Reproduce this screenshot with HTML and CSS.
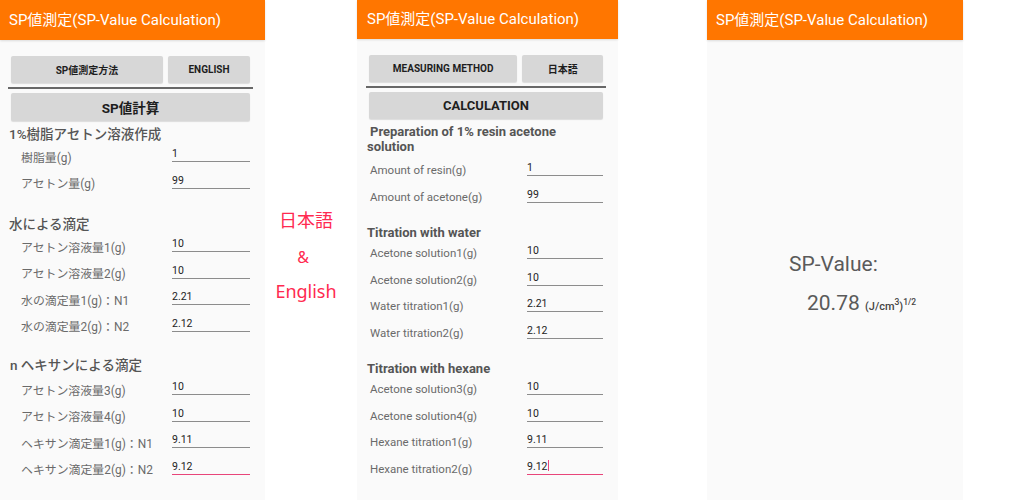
FILE: index.html
```html
<!DOCTYPE html>
<html lang="ja">
<head>
<meta charset="utf-8">
<title>SP値測定</title>
<link rel="stylesheet" href="styles.css">
</head>
<body>
<div class="stage">
  <section class="phone phone-ja">
    <header class="appbar">SP値測定(SP-Value Calculation)</header>
    <div class="content">
      <div class="btn-row">
        <div class="btn btn-main">SP値測定方法</div>
        <div class="btn btn-side">ENGLISH</div>
      </div>
      <div class="divider"></div>
      <div class="btn btn-big">SP値計算</div>

      <h2 class="sec sec-first">1%樹脂アセトン溶液作成</h2>
      <div class="field"><span class="lbl">樹脂量(g)</span><span class="inp">1</span></div>
      <div class="field"><span class="lbl">アセトン量(g)</span><span class="inp">99</span></div>

      <h2 class="sec">水による滴定</h2>
      <div class="field"><span class="lbl">アセトン溶液量1(g)</span><span class="inp">10</span></div>
      <div class="field"><span class="lbl">アセトン溶液量2(g)</span><span class="inp">10</span></div>
      <div class="field"><span class="lbl">水の滴定量1(g)：N1</span><span class="inp">2.21</span></div>
      <div class="field"><span class="lbl">水の滴定量2(g)：N2</span><span class="inp">2.12</span></div>

      <h2 class="sec sec-n">n ヘキサンによる滴定</h2>
      <div class="field"><span class="lbl">アセトン溶液量3(g)</span><span class="inp">10</span></div>
      <div class="field"><span class="lbl">アセトン溶液量4(g)</span><span class="inp">10</span></div>
      <div class="field"><span class="lbl">ヘキサン滴定量1(g)：N1</span><span class="inp">9.11</span></div>
      <div class="field"><span class="lbl">ヘキサン滴定量2(g)：N2</span><span class="inp inp-focus">9.12</span></div>
    </div>
  </section>

  <div class="caption">
    <span class="cap-line">日本語</span>
    <span class="cap-amp">&amp;</span>
    <span class="cap-line">English</span>
  </div>

  <section class="phone phone-en">
    <header class="appbar">SP値測定(SP-Value Calculation)</header>
    <div class="content">
      <div class="btn-row">
        <div class="btn btn-main">MEASURING METHOD</div>
        <div class="btn btn-side">日本語</div>
      </div>
      <div class="divider"></div>
      <div class="btn btn-big">CALCULATION</div>

      <h2 class="sec sec-first sec-wrap">Preparation of 1% resin acetone solution</h2>
      <div class="field"><span class="lbl">Amount of resin(g)</span><span class="inp">1</span></div>
      <div class="field"><span class="lbl">Amount of acetone(g)</span><span class="inp">99</span></div>

      <h2 class="sec">Titration with water</h2>
      <div class="field"><span class="lbl">Acetone solution1(g)</span><span class="inp">10</span></div>
      <div class="field"><span class="lbl">Acetone solution2(g)</span><span class="inp">10</span></div>
      <div class="field"><span class="lbl">Water titration1(g)</span><span class="inp">2.21</span></div>
      <div class="field"><span class="lbl">Water titration2(g)</span><span class="inp">2.12</span></div>

      <h2 class="sec">Titration with hexane</h2>
      <div class="field"><span class="lbl">Acetone solution3(g)</span><span class="inp">10</span></div>
      <div class="field"><span class="lbl">Acetone solution4(g)</span><span class="inp">10</span></div>
      <div class="field"><span class="lbl">Hexane titration1(g)</span><span class="inp">9.11</span></div>
      <div class="field"><span class="lbl">Hexane titration2(g)</span><span class="inp inp-focus">9.12<span class="cursor"></span></span></div>
    </div>
  </section>

  <section class="phone phone-result">
    <header class="appbar">SP値測定(SP-Value Calculation)</header>
    <div class="result">
      <div class="result-label">SP-Value:</div>
      <div class="result-value">20.78 <span class="unit">(J/cm<sup>3</sup>)<sup>1/2</sup></span></div>
    </div>
  </section>
</div>
</body>
</html>
```

FILE: styles.css
```css
* { box-sizing: border-box; }

html, body {
  margin: 0;
  padding: 0;
  background: #ffffff;
}

body {
  font-family: Roboto, "Noto Sans CJK JP", sans-serif;
  width: 1024px;
  height: 500px;
  overflow: hidden;
}

.stage {
  display: flex;
  height: 500px;
}

.phone {
  background: #fafafa;
  height: 500px;
  display: flex;
  flex-direction: column;
}

.phone-ja { width: 265px; }
.phone-en { width: 261px; }
.phone-result { width: 256px; margin-left: 89px; }

.appbar {
  background: #ff7600;
  color: #ffffff;
  font-size: 15px;
  font-weight: 400;
  height: 40px;
  line-height: 40px;
  padding-left: 9px;
  white-space: nowrap;
  box-shadow: 0 1px 2px rgba(0, 0, 0, 0.12);
}

.phone-en .appbar { height: 39px; line-height: 39px; padding-left: 10px; }

.content {
  display: flex;
  flex-direction: column;
  padding: 16px 12px 0 8px;
}

.phone-en .content { padding: 16px 12px 0 9px; }

.btn-row {
  display: flex;
  gap: 5px;
  margin: 0 3px;
}

.btn {
  background: #d7d7d7;
  color: #1e1e1e;
  font-weight: 700;
  font-size: 10px;
  height: 27px;
  display: flex;
  align-items: center;
  justify-content: center;
  border-radius: 2px;
  box-shadow: 0 1px 1px rgba(0, 0, 0, 0.12);
  white-space: nowrap;
}

.phone-ja .btn-main { width: 152px; }
.phone-ja .btn-side { width: 82px; }
.phone-en .btn-main { width: 149px; }
.phone-en .btn-side { width: 81px; }

.divider {
  height: 2px;
  background: #686868;
  margin-top: 4px;
}

.btn-big {
  margin: 4px 3px 0;
  height: 28px;
  font-size: 13.5px;
}

.phone-en .btn-big { height: 27px; font-size: 13px; }

.sec {
  margin: 19px 0 0;
  font-size: 13.5px;
  font-weight: 500;
  line-height: 18px;
  color: #555555;
  padding-left: 1px;
}

.sec-first { margin-top: 4px; }
.sec-n { margin-top: 17px; margin-bottom: 2px; padding-left: 2px; }

.phone-en .sec {
  font-size: 13px;
  font-weight: 700;
  line-height: 15px;
  margin-top: 15px;
  margin-bottom: 0;
  padding-left: 1px;
}

.phone-en .sec-first { margin-top: 5px; margin-bottom: 3px; }
.phone-en .sec-wrap { text-indent: 3px; padding-right: 10px; }

.field {
  display: flex;
  align-items: center;
  justify-content: space-between;
  height: 26.5px;
}

.lbl {
  color: #6a6a6a;
  font-size: 11.9px;
  padding-left: 13px;
  white-space: nowrap;
}

.phone-en .lbl { font-size: 11.5px; padding-left: 4px; }

.inp {
  width: 78px;
  margin-right: 3px;
  margin-bottom: 6px;
  height: 18px;
  padding-top: 3px;
  line-height: 14px;
  font-size: 10.5px;
  color: #222222;
  border-bottom: 1px solid #8c8c8c;
}

.phone-en .inp { width: 76px; margin-right: 3px; }

.inp-focus {
  border-bottom: 1.5px solid #e8457a;
}

.cursor {
  display: inline-block;
  width: 1px;
  height: 11px;
  background: #e8457a;
  vertical-align: -1px;
  margin-left: 1px;
}

.caption {
  width: 92px;
  display: flex;
  flex-direction: column;
  align-items: center;
  padding-top: 206px;
  padding-right: 10px;
  color: #ff2a50;
  font-family: "Noto Sans", "Noto Sans CJK JP", sans-serif;
  font-size: 18px;
  line-height: 28px;
}

.cap-line { display: block; }
.cap-amp { display: block; margin: 9px 6px 6px 0; line-height: 28px; font-size: 16px; }

.result {
  display: flex;
  flex-direction: column;
  padding-top: 212px;
  color: #5a5a5a;
}

.result-label {
  font-size: 21px;
  line-height: 24px;
  padding-left: 82px;
}

.result-value {
  font-size: 21px;
  line-height: 24px;
  padding-left: 100px;
  margin-top: 15px;
  white-space: nowrap;
}

.unit {
  font-size: 11px;
  color: #444444;
  font-weight: 500;
}

.unit sup {
  font-size: 8.5px;
  line-height: 0;
  vertical-align: 5px;
}
```
